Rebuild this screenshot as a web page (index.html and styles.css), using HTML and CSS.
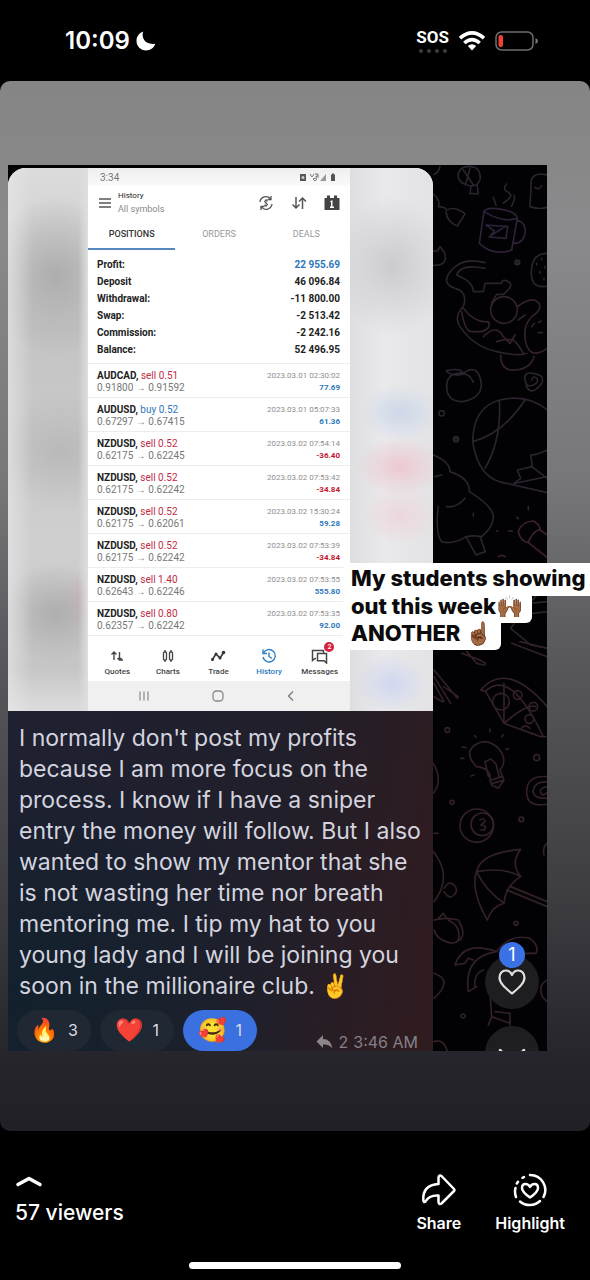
FILE: index.html
```html
<!DOCTYPE html>
<html lang="en">
<head>
<meta charset="utf-8">
<meta name="viewport" content="width=device-width, initial-scale=1">
<title>Story</title>
<link rel="stylesheet" href="styles.css">
</head>
<body>
<header class="status">
  <div class="status-left">
    <time>10:09</time>
    <svg width="20" height="20" viewBox="0 0 20 20"><path fill="#fff" d="M7.200.6C5 6.500 9 14.500 19.400 12.800 17.600 17.400 14 19.500 10 19.500 4.700 19.500.5 15.200.5 10 .5 5.800 3 2 7.200.6Z"/></svg>
  </div>
  <div class="status-right">
    <div class="sos"><b>SOS</b><span class="sos-dots"><i></i><i></i><i></i><i></i></span></div>
    <svg width="28" height="20" viewBox="0 0 28 20"><g fill="none" stroke="#fff" stroke-width="3.600"><path d="M2 7.200Q14-3.400 26 7.200"/><path d="M6.300 12Q14 5.200 21.700 12"/></g><path fill="#fff" d="M9.800 15Q14 11.300 18.200 15L14 19.500Z"/></svg>
    <svg width="44" height="20" viewBox="0 0 44 20"><rect x="1" y="1" width="37" height="18" rx="5.500" fill="none" stroke="#6d6d6d" stroke-width="1.500"/><path d="M40.500 7Q43 8 43 10T40.500 13Z" fill="#777"/><rect x="3.500" y="4" width="4.500" height="12" rx="2" fill="#f0402f"/></svg>
  </div>
</header>

<main class="story">
  <section class="chat">
    <article class="bubble">
      <div class="photo">
        <div class="haze haze-left"></div>
        <div class="phone">
          <div class="phone-status"><span>3:34</span>
            <svg width="40" height="9" viewBox="0 0 40 9" fill="#555"><path d="M2 1h6v7H2z"/><circle cx="5" cy="4.500" r="1.500" fill="#ccc"/><path d="M12 1l2 3 2-3M17 1h3v2h-2v1h3M15 6q2-2 4 0l-2 2z" stroke="#777" fill="none"/><path d="M28 1v7h-6z" fill="#999"/><path d="M33 1.500h1V.5h2v1h1V8h-4z"/></svg>
          </div>
          <div class="phone-head">
            <svg width="12" height="12" viewBox="0 0 12 12" stroke="#555" stroke-width="1.300"><path d="M0 2h12M0 6h12M0 10h12"/></svg>
            <div class="phone-title"><span>History</span><small>All symbols</small></div>
            <div class="phone-tools">
              <svg width="16" height="16" viewBox="0 0 16 16" fill="none" stroke="#555" stroke-width="1.300"><path d="M2 7a6 6 0 0 1 10.500-3.200M14 9A6 6 0 0 1 3.500 12.200M13 1v3.500H9.500M3 15v-3.500h3.500"/><path d="M10 6Q8 4.500 6.500 6 6.300 7.500 8 8T9.500 10Q8 11.500 6 10M8 4v8" stroke-width="1"/></svg>
              <svg width="16" height="16" viewBox="0 0 16 16" fill="none" stroke="#555" stroke-width="1.500"><path d="M5 2v11M1.500 9.500 5 13l3.500-3.500M11.500 14V3M8 6.500 11.500 3 15 6.500"/></svg>
              <svg width="16" height="16" viewBox="0 0 16 16"><path fill="#444" d="M.5 3H3V.5h3V3h4V.5h3V3h2.500v12H.5z"/><path fill="#fff" d="M6 6.500 8.500 5v6.500H10V13H6v-1.500h1V7H6z"/></svg>
            </div>
          </div>
          <nav class="tabs"><button class="tab on">POSITIONS</button><button class="tab">ORDERS</button><button class="tab">DEALS</button></nav>
          <dl class="summary">
            <div><dt>Profit:</dt><dd class="up">22 955.69</dd></div>
            <div><dt>Deposit</dt><dd>46 096.84</dd></div>
            <div><dt>Withdrawal:</dt><dd>-11 800.00</dd></div>
            <div><dt>Swap:</dt><dd>-2 513.42</dd></div>
            <div><dt>Commission:</dt><dd>-2 242.16</dd></div>
            <div><dt>Balance:</dt><dd>52 496.95</dd></div>
          </dl>
          <ul class="deals">
            <li><p><b>AUDCAD,</b> <span class="sell">sell 0.51</span></p><time>2023.03.01 02:30:02</time><p class="quote">0.91800 → 0.91592</p><b class="sum up">77.69</b></li>
            <li><p><b>AUDUSD,</b> <span class="buy">buy 0.52</span></p><time>2023.03.01 05:07:33</time><p class="quote">0.67297 → 0.67415</p><b class="sum up">61.36</b></li>
            <li><p><b>NZDUSD,</b> <span class="sell">sell 0.52</span></p><time>2023.03.02 07:54:14</time><p class="quote">0.62175 → 0.62245</p><b class="sum down">-36.40</b></li>
            <li><p><b>NZDUSD,</b> <span class="sell">sell 0.52</span></p><time>2023.03.02 07:53:42</time><p class="quote">0.62175 → 0.62242</p><b class="sum down">-34.84</b></li>
            <li><p><b>NZDUSD,</b> <span class="sell">sell 0.52</span></p><time>2023.03.02 15:30:24</time><p class="quote">0.62175 → 0.62061</p><b class="sum up">59.28</b></li>
            <li><p><b>NZDUSD,</b> <span class="sell">sell 0.52</span></p><time>2023.03.02 07:53:39</time><p class="quote">0.62175 → 0.62242</p><b class="sum down">-34.84</b></li>
            <li><p><b>NZDUSD,</b> <span class="sell">sell 1.40</span></p><time>2023.03.02 07:53:55</time><p class="quote">0.62643 → 0.62246</p><b class="sum up">555.80</b></li>
            <li><p><b>NZDUSD,</b> <span class="sell">sell 0.80</span></p><time>2023.03.02 07:53:35</time><p class="quote">0.62357 → 0.62242</p><b class="sum up">92.00</b></li>
          </ul>
          <nav class="dock">
            <button><svg width="16" height="16" viewBox="0 0 16 16" fill="none" stroke="#444" stroke-width="1.400"><path d="M5 12V4M2.500 6.500 5 4l2.500 2.500M10.500 4v8M8.500 10l2 2 2-2M10.500 12H14"/></svg>Quotes</button>
            <button><svg width="16" height="16" viewBox="0 0 16 16" fill="none" stroke="#444" stroke-width="1.300"><path d="M5 2v2M5 12v2M11 2v2M11 12v2"/><rect x="3.500" y="4" width="3" height="8" rx="1"/><rect x="9.500" y="4" width="3" height="8" rx="1"/></svg>Charts</button>
            <button><svg width="16" height="16" viewBox="0 0 16 16" fill="none" stroke="#333" stroke-width="1.600"><path d="M2 12l4-6 4 4 4-6"/><g fill="#333" stroke="none"><circle cx="2.500" cy="11.500" r="1.500"/><circle cx="6" cy="6" r="1.500"/><circle cx="10" cy="10" r="1.500"/><circle cx="13.500" cy="4.500" r="1.800"/></g></svg>Trade</button>
            <button class="on"><svg width="16" height="16" viewBox="0 0 16 16" fill="none" stroke="#2f7fc4" stroke-width="1.400"><path d="M2.500 5A6.200 6.200 0 1 1 2 9M2 1.500V5.500H6M8 4.500v4l3 2"/></svg>History</button>
            <button><svg width="18" height="16" viewBox="0 0 18 16" fill="none" stroke="#444" stroke-width="1.500"><path d="M5 10.500H4l-2.500 2V2.500h11V5"/><path d="M6.500 5.500h9V15l-2.500-2.200H6.500z"/></svg><em>2</em>Messages</button>
          </nav>
          <div class="keys">
            <svg width="12" height="12" viewBox="0 0 12 12" stroke="#777"><path d="M2 1.500v9M6 1.500v9M10 1.500v9"/></svg>
            <svg width="12" height="12" viewBox="0 0 12 12" fill="none" stroke="#888" stroke-width="1.300"><rect x="1" y="1" width="10" height="10" rx="3.500"/></svg>
            <svg width="12" height="12" viewBox="0 0 12 12" fill="none" stroke="#777" stroke-width="1.300"><path d="M8 1.500 3.500 6 8 10.500"/></svg>
          </div>
        </div>
        <div class="haze haze-right"></div>
      </div>
      <div class="caption">
        <p>I normally don't post my profits<br>because I am more focus on the<br>process. I know if I have a sniper<br>entry the money will follow. But I also<br>wanted to show my mentor that she<br>is not wasting her time nor breath<br>mentoring me. I tip my hat to you<br>young lady and I will be joining you<br>soon in the millionaire club. ✌️</p>
        <div class="reactions">
          <button class="pill"><span>🔥</span>3</button>
          <button class="pill"><span>❤️</span>1</button>
          <button class="pill mine"><span>🥰</span>1</button>
          <div class="meta"><svg width="17" height="14" viewBox="0 0 17 14" fill="#8a858b"><path d="M7 0v4q8 0 9.500 9.500Q13 9 7 9.500V13L.5 6.500Z"/></svg><span>2</span><time>3:46 AM</time></div>
        </div>
      </div>
    </article>
    <aside class="wall">
      <svg class="doodles" width="114" height="886" viewBox="0 0 114 886" fill="none" stroke="#2b232d" stroke-linecap="round" stroke-linejoin="round">
        <g transform="translate(-3 -5) scale(.3333)" stroke-width="5">
          <path d="M85 40Q95 15 125 20T150 60Q140 85 110 75T85 40M100 30l30 45M120 25l-12 45M123 80l-3 20 25 2-3-25"/>
          <path d="M0 95q35 25 25 45 20 0 25 10 20-10 40 2 20 8 12 15L82 198Q50 185 48 155M0 45q25 0 30-25"/>
          <g stroke="#2e2138"><path d="M162 155L148 250Q190 290 245 270L262 175M162 155Q170 140 215 148T262 175Q220 190 162 155M262 180Q290 190 285 220T252 250M168 195l65 5-5 35-50-4 15-18zM178 230l50-32"/></g>
          <path d="M230 72q-15 15 5 25t-15 32M190 112l8 24M252 105q5 12-8 34"/>
          <path d="M352 45q-40-10-48 15L300 140Q330 150 352 142M315 82q12 10 20-5M0 265q20 20 30-5 20 20 15 40t-45 15"/>
          <path d="M352 280Q305 280 304 335T352 378M320 310v4M335 295v4M330 335v4M345 320v4M342 355v4"/>
          <circle cx="262" cy="307" r="7" fill="#211c22"/>
          <path d="M165 308Q100 290 65 330T75 385Q115 395 100 440 70 470 90 500 130 560 200 575T290 580M165 325Q90 310 80 345 130 365 130 395h30l5-25h50q0-15 20-5t-15 38h-20l-15 25"/>
          <circle cx="222" cy="450" r="40" stroke="#33222d"/><path stroke="#33222d" d="M262 440q45-35 65-10 10 20-20 38Q275 500 288 550T352 565M305 500l8-10M325 488l8-5M325 518h12M95 455q10 60 30 60h30q30-10 20-30-40 5-75-40M160 530q40-40 60 0l20 20 15-25M200 545q45-15 60 5T280 580M212 585q0 50 45 45t55-40M285 465l-20 15"/>
          <path d="M100 640Q140 610 152 660T100 725Q50 725 50 680T100 640M50 632q45-10 50 10 20 0 30 25M50 635q20 15 50 8"/>
          <path d="M305 660q5-15 15-5t-10 20-25-15 25-20 28 20-20 28-30-10"/>
          <circle cx="35" cy="760" r="8"/><circle cx="78" cy="838" r="8" fill="#211c22"/>
          <path d="M352 750Q290 700 210 720T128 845Q145 960 230 970L352 998M128 845Q220 820 285 720M208 720Q215 840 165 925M352 870q-30 15-50 15l5 35-45 10 10 25-20 15M305 920l47 35M255 970l97-20"/>
          <path d="M10 885q50 20 50 50 60 20 58 60Q190 1040 190 1070T155 1130Q130 1125 108 1130 70 1155 35 1145 15 1120 25 1040M50 1040q30 5 55-25M108 1130l30 55 28-10-15-42M15 950l20-5M130 1060v8"/>
          <path stroke="#3c222b" d="M265 1115q10-30 45-32 20 10 20 25-25 10-35 40-25-5-30-33M330 1110l22 15M295 1148l57 45M295 1040v10M260 1072l5 4M235 1113h12M200 1113h4M205 1190q10-8 20 0"/>
          <path d="M352 1230q-80 10-100 60l-40 30 30 15 110-10M230 1290l60 50 62-70M130 1210q20 30 70 10M352 1355l-80 10-30 40 60 50 50 10"/>
        </g>
        <g transform="translate(-3 475) scale(.3333)" stroke="#322127" stroke-width="5">
          <path d="M245 10l107 40M270 5l82 20M95 40l55 20q20 10 15 15M110 35l30 35 20 5M12 90l70 85M12 110l50 80M12 130l30 55M40 140l45 30M12 170l25 15"/>
          <path d="M152 150Q230 60 352 200M165 155Q240 80 340 290M152 150l15 5 55 95 110 40h15M222 250q70-60 95-50M222 130v120"/><circle cx="213" cy="185" r="25"/><circle cx="263" cy="165" r="13"/><circle cx="310" cy="200" r="13"/><circle cx="298" cy="237" r="13"/><path d="M275 265q10-15 25 0"/>
          <path d="M180 420Q185 385 140 380 100 340 135 315T205 325Q235 360 210 390L222 420 205 445 185 435ZM165 365l10 45M165 365l18-8 15 15 10 40M185 420l30-10M188 430l30-8M180 275v-8M215 290l5-5M228 328l8-2M138 292l-4-5M108 323l-12-2M102 355h-10M132 405l-8 3"/>
          <circle cx="140" cy="557" r="50"/><circle cx="157" cy="553" r="34"/><path d="M150 540q15-8 15 5l-12 10q20 0 10 15h-12"/>
          <path d="M352 410Q290 405 290 455T352 492M352 425Q315 425 310 450T352 475M352 440q-25 5-20 18t20 0"/>
          <circle cx="52" cy="270" r="7"/><circle cx="320" cy="353" r="9"/><circle cx="66" cy="487" r="6"/><circle cx="274" cy="538" r="7"/><circle cx="258" cy="850" r="6"/><circle cx="99" cy="1128" r="6"/><path d="M10 370q30 50 0 90M12 580h12M352 610q-15 10-10 35"/>
          <path d="M272 628Q150 640 140 695 120 750 172 840 185 800 222 790 225 740 272 710 240 670 272 628M140 695Q220 680 272 710M140 695q25 55 82 95M230 750l122 50M242 740l110 45"/>
          <path d="M10 635Q70 710 12 785M42 745q15-25 30-10t0 30-30-10M12 840Q50 830 85 840 120 900 65 910 20 900 12 870M25 835l15-15 10 15M55 840q40 20 30 60"/>
          <path d="M75 975Q100 900 200 935 240 880 300 895 330 920 318 940L280 940M75 975l30-5 10-15 15 5M200 935Q100 950 115 1055l25-15M160 990q-30 10-25 50M180 1060l5 70 55 20M195 1115l45 5v35M185 1130l-10 25M12 1000q60 20 0 75M352 1020q-20 10-20 30t20 35M12 1205q30-10 40 30"/>
        </g>
      </svg>
      <div class="likes">
        <button class="round" aria-label="Like"><span class="badge">1</span><svg width="30" height="28" viewBox="0 0 30 28"><path fill="none" stroke="#e2e0de" stroke-width="2.200" stroke-linejoin="round" d="M15 25.500C9 20.500 2.500 15.500 2.500 9.500 2.500 5.500 5.200 2.500 8.700 2.500 11.500 2.500 14 4.500 15 7 16 4.500 18.500 2.500 21.300 2.500 24.800 2.500 27.500 5.500 27.500 9.500 27.500 15.500 21 20.500 15 25.500Z"/></svg></button>
        <button class="round" aria-label="Scroll down"><svg width="30" height="28" viewBox="0 0 30 28"><path fill="none" stroke="#e2e0de" stroke-width="2.500" stroke-linecap="round" d="M3 11l12 11 12-11"/></svg></button>
      </div>
    </aside>
  </section>
  <p class="sticker"><span>My students showing</span><span>out this week🙌🏾</span><span>ANOTHER ☝🏾</span></p>
</main>

<footer class="bottom">
  <button class="viewers"><svg width="28" height="12" viewBox="0 0 28 12"><path d="M3 9.500 14 3.500 25 9.500" fill="none" stroke="#fff" stroke-width="3.600" stroke-linecap="round" stroke-linejoin="round"/></svg>57 viewers</button>
  <div class="actions">
    <button><svg width="36" height="34" viewBox="0 0 36 34" fill="none" stroke="#fff" stroke-width="2.500" stroke-linejoin="round" stroke-linecap="round"><path d="M17.500 4.500Q18 1.500 20.500 3L33 16Q34 17 33 18L20.500 30.500Q18 32 17.500 29V22.500Q8 22 4.500 28.500 2.500 30 2.300 27 1.500 12 17.500 11Z"/></svg>Share</button>
    <button><svg width="36" height="34" viewBox="0 0 36 34" fill="none" stroke="#fff" stroke-width="2.500" stroke-linecap="round" stroke-linejoin="round"><path d="M18 2A15 15 0 0 1 31.500 24M28 28A15 15 0 0 1 8 28.500M4 24A15 15 0 0 1 3.500 15M4.800 10.500 6 8.800M10.500 4.800 12 4"/><path d="M18 24.500Q10 19 10 15 10 11 13.500 11 16.500 11 18 14 19.500 11 22.500 11 26 11 26 15 26 19 18 24.500Z"/></svg>Highlight</button>
  </div>
</footer>
<div class="home"></div>
</body>
</html>
```
FILE: styles.css
```css
* { box-sizing: border-box; margin: 0; padding: 0; }
body { background: #000; color: #fff; font-family: Inter, "Noto Color Emoji", sans-serif; display: flex; flex-direction: column; min-height: 100vh; }
button { background: none; border: 0; color: inherit; font: inherit; }
svg { display: block; flex: none; }
ul { list-style: none; }

.status { height: 81px; padding: 0 51px 0 65px; display: flex; align-items: center; justify-content: space-between; }
.status-left { display: flex; align-items: center; gap: 6px; font-size: 24px; font-weight: 600; }
.status-right { display: flex; align-items: center; gap: 9px; }
.sos { display: flex; flex-direction: column; gap: 3px; font: 17px/18px Roboto, sans-serif; }
.sos-dots { display: flex; gap: 4px; justify-content: center; }
.sos-dots i { width: 4px; height: 4px; border-radius: 50%; background: #3c3c3c; }

.story { position: relative; border-radius: 10px; padding: 84px 43px 80px 8px; background: linear-gradient(#858585 0%, #8a8a8c 14%, #77777a 38%, #58585c 55%, #3c3c41 78%, #25252b 93%, #202026 100%); }
.chat { display: grid; grid-template-columns: minmax(0, 425fr) minmax(0, 114fr); background: #020104; overflow: hidden; }
.bubble { padding-top: 3px; }
.photo { display: grid; grid-template-columns: minmax(0, 80fr) minmax(0, 262fr) minmax(0, 83fr); border-radius: 18px 18px 0 0; overflow: hidden; background: #fff; }
.haze-left { background: linear-gradient(90deg, #e6e6e6aa, transparent 30%, transparent 88%, #dedede), radial-gradient(70px 80px at 60% 20%, #adadad, transparent), radial-gradient(70px 60px at 65% 52%, #b9b9b9, transparent), radial-gradient(60px 50px at 60% 82%, #aeaeae, transparent), radial-gradient(30px 30px at 100% 80%, #d9b4bd, transparent), linear-gradient(#dcdcdc, #c4c4c4 30%, #cfcfcf 70%, #c5c5c5 92%, #dddddd); }
.haze-right { background: radial-gradient(60px 70px at 50% 18%, #cbcbcd, transparent), radial-gradient(40px 28px at 60% 45%, #cdd8ea, transparent), radial-gradient(45px 30px at 60% 55%, #ecc9d1, transparent), radial-gradient(40px 30px at 60% 64%, #ecd7dc, transparent), radial-gradient(35px 30px at 50% 95%, #d0d6f0, transparent), linear-gradient(90deg, #dedee0, #e9e9eb 40%, #e3e3e5); }

.phone { background: #fff; color: #222; font-family: Roboto, sans-serif; font-size: 10px; }
.phone-status { height: 18px; padding: 0 12px; display: flex; align-items: center; justify-content: space-between; color: #777; background: linear-gradient(#eee, #fafafa); }
.phone-head { height: 34px; padding: 0 10px 0 11px; display: flex; align-items: center; gap: 7px; }
.phone-title { display: flex; flex-direction: column; font-size: 8px; line-height: 12px; }
.phone-title small { font-size: 9px; line-height: 14px; color: #888; }
.phone-tools { display: flex; gap: 17px; margin-left: auto; }
.tabs { display: grid; grid-template-columns: repeat(3, minmax(0, 1fr)); height: 30px; }
.tab { font-size: 9px; color: #999; border-bottom: 2px solid transparent; }
.tab.on { color: #333; border-color: #5586bd; font-weight: 500; }
.summary { padding: 6px 10px 5px 9px; font-weight: 700; line-height: 17px; }
.summary div { display: flex; justify-content: space-between; }
.up { color: #2c77bd; }
.down { color: #c4162f; }
.deals li { display: grid; grid-template-columns: 1fr auto; align-items: center; height: 34px; padding: 6px 10px 3px 9px; border-top: 1px solid #ececee; line-height: 12px; }
.deals li:last-child { height: 35px; border-bottom: 1px solid #ececee; }
.deals time { font-size: 8px; color: #8e8e8e; }
.sell { color: #c22b48; }
.buy { color: #3076b8; }
.quote { color: #777; }
.sum { font-size: 8px; text-align: right; }
.dock { display: grid; grid-template-columns: repeat(5, minmax(0, 1fr)); height: 45px; padding: 9px 5px 2px 4px; font-size: 8px; font-weight: 500; color: #444; }
.dock button { position: relative; display: flex; flex-direction: column; align-items: center; justify-content: center; gap: 3px; line-height: 10px; }
.dock .on { color: #2878be; }
.dock em { position: absolute; top: -3px; left: 30px; width: 10px; height: 10px; border-radius: 50%; background: #d6213c; color: #fff; font-size: 7px; font-style: normal; }
.keys { height: 30px; padding: 0 53px 0 50px; display: flex; align-items: center; justify-content: space-between; background: #f0f0f1; }

.caption { height: 340px; overflow: hidden; padding: 12px 11px 0; color: #d3d4df; font-size: 23px; line-height: 31px; white-space: nowrap; background: radial-gradient(300px 240px at 0 85%, #12212d, transparent), linear-gradient(100deg, #1f2030 20%, #211f2a 60%, #2f1c21 95%); }
.reactions { display: flex; gap: 9px; margin: 8px -2px 0; }
.pill { flex: none; width: 74px; height: 41px; border-radius: 21px; background: #1f2833; display: flex; align-items: center; justify-content: center; gap: 9px; font-size: 16px; color: #d9dbe4; }
.pill span { font-size: 23px; }
.pill.mine { background: #3a70df; }
.meta { margin-left: auto; padding-right: 6px; align-self: flex-end; display: flex; align-items: center; gap: 5px; font-size: 16px; line-height: 18px; color: #858086; }

.wall { position: relative; overflow: hidden; display: flex; flex-direction: column; justify-content: flex-end; }
.doodles { position: absolute; top: 0; left: 0; }
.likes { position: relative; display: flex; flex-direction: column; gap: 17px; align-items: center; padding-left: 44px; height: 96px; }
.round { position: relative; flex: none; width: 54px; height: 54px; border-radius: 50%; background: #1e1d1f; display: flex; align-items: center; justify-content: center; }
.badge { position: absolute; top: -13px; left: 14px; width: 26px; height: 26px; border-radius: 50%; background: #3a72e6; font-size: 18px; line-height: 26px; }

.sticker { position: absolute; top: 482px; right: 0; width: 247px; display: flex; flex-direction: column; align-items: flex-start; color: #0b0b0b; font-size: 22px; font-weight: 800; line-height: 27px; white-space: nowrap; }
.sticker span { background: #fff; padding: 0 8px; }
.sticker span:first-child { width: 100%; padding-top: 2px; padding-bottom: 4px; border-radius: 6px 0 0 0; }
.sticker span:nth-child(2) { line-height: 20px; padding-bottom: 7px; border-radius: 0 0 6px 0; }
.sticker span:last-child { line-height: 20px; padding-bottom: 7px; border-radius: 0 0 6px 6px; }

.bottom { display: flex; justify-content: space-between; align-items: flex-start; padding: 42px 25px 0 15px; }
.viewers { display: flex; flex-direction: column; align-items: flex-start; gap: 13px; padding-top: 2px; font-size: 21px; line-height: 26px; font-weight: 500; }
.actions { display: flex; gap: 34px; font-size: 16px; line-height: 20px; font-weight: 600; }
.actions button { display: flex; flex-direction: column; align-items: center; gap: 6px; }
.home { width: 36%; height: 7px; border-radius: 4px; background: #fff; margin: auto auto 11px; }
```
